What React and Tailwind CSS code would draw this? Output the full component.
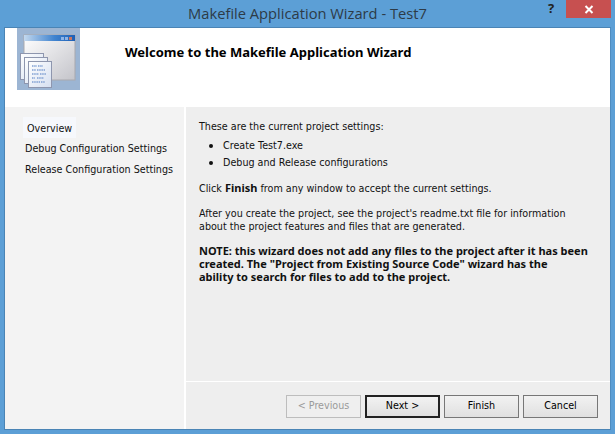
const tahoma = "font-['DejaVu_Sans',sans-serif]";
const bold = "font-['Noto_Sans',sans-serif] font-bold";

function WizardIcon() {
  return (
    <svg width="63" height="62" viewBox="0 0 63 62" className="shrink-0 bg-[#9cb5d3]">
      <defs>
        <linearGradient id="bar" x1="0" x2="1" y1="0" y2="0">
          <stop offset="0" stopColor="#c3d8ee" />
          <stop offset="0.6" stopColor="#3f83cf" />
          <stop offset="1" stopColor="#1f5fb5" />
        </linearGradient>
        <linearGradient id="body" x1="0" x2="1" y1="0" y2="1">
          <stop offset="0" stopColor="#ffffff" />
          <stop offset="1" stopColor="#c4c4ca" />
        </linearGradient>
        <linearGradient id="page" x1="0" x2="1" y1="0" y2="1">
          <stop offset="0" stopColor="#ffffff" />
          <stop offset="1" stopColor="#d5dff0" />
        </linearGradient>
      </defs>
      <rect x="7" y="7" width="51" height="45" fill="url(#body)" stroke="#a9a9ae" />
      <rect x="7" y="7" width="51" height="6" fill="url(#bar)" />
      <rect x="44" y="9" width="3" height="3" fill="#8fb4e6" />
      <rect x="48" y="9" width="3" height="3" fill="#8fb4e6" />
      <rect x="52" y="9" width="3" height="3" fill="#c9765f" />
      <rect x="3.5" y="25.5" width="23" height="26" fill="url(#page)" stroke="#8e96ae" />
      <rect x="7.5" y="29.5" width="23" height="26" fill="url(#page)" stroke="#8e96ae" />
      <rect x="11.5" y="33.5" width="23" height="26" fill="url(#page)" stroke="#8e96ae" />
      <path
        d="M15 38h5m1 0h5M15 42h4m1 0h8M15 46h7m1 0h6M15 50h3m2 0h7M15 54h8m1 0h4"
        stroke="#7f9fd2"
        strokeWidth="1.4"
        strokeDasharray="1.5 0.7"
      />
    </svg>
  );
}

function Btn({ children, primary, disabled }) {
  return (
    <button
      disabled={disabled}
      className={
        primary
          ? "w-[75px] h-[23px] border-2 border-[#222] bg-gradient-to-b from-[#f2f2f2] to-[#e0e0e0] text-[9.6px] text-black"
          : disabled
            ? "w-[75px] h-[23px] border border-[#bdbdbd] bg-[#efefef] text-[9.6px] text-[#9a9a9a]"
            : "w-[75px] h-[23px] border border-[#777] bg-gradient-to-b from-[#f2f2f2] to-[#e0e0e0] text-[9.6px] text-black"
      }
    >
      {children}
    </button>
  );
}

function Bullet({ children }) {
  return (
    <li className="flex items-center">
      <span className="ml-[10px] mr-[10px] w-[4px] h-[4px] rounded-full bg-[#111]" />
      {children}
    </li>
  );
}

export default function App() {
  return (
    <div className={`w-[615px] h-[434px] bg-[#5c9fd6] flex flex-col overflow-hidden text-[#111] ${tahoma}`}>
      <div className="relative h-[27px] shrink-0 flex items-center justify-center font-['Open_Sans',sans-serif] text-[14.7px] text-[#2d3b47]">
        <span>Makefile Application Wizard - Test7</span>
        <span className="absolute left-[548px] top-[1px] text-[13px] font-bold text-[#222] leading-[14px]">?</span>
        <div className="absolute left-[566px] top-0 w-[45px] h-[18px] bg-[#c75050] flex items-center justify-center">
          <svg width="10" height="9" viewBox="0 0 10 9">
            <path d="M1.5 1l7 7M8.5 1l-7 7" stroke="#fff" strokeWidth="2" />
          </svg>
        </div>
      </div>
      <div className="mx-[4px] mb-[4px] flex-1 flex flex-col border border-[#4a84b5] border-r-[#4f8cc0]">
        <div className="h-[79px] shrink-0 bg-white flex items-start pl-[12px]">
          <WizardIcon />
          <h1 className={`ml-[45px] mt-[15px] text-[13px] text-black ${bold}`}>
            Welcome to the Makefile Application Wizard
          </h1>
        </div>
        <div className="flex-1 flex bg-white">
          <nav className="w-[179px] bg-[#f3f3f3] pl-[18px] pt-[10px] text-[9.6px] flex flex-col items-start">
            <span className="bg-[#f6f8fc] px-[4px] h-[21px] leading-[23px]">Overview</span>
            <span className="ml-[2px] leading-[22px] h-[20px]">Debug Configuration Settings</span>
            <span className="ml-[2px] mt-[1px] leading-[22px] h-[20px]">Release Configuration Settings</span>
          </nav>
          <div className="ml-[2px] flex-1 flex flex-col">
            <div className="flex-1 bg-[#eeeeee] pl-[13px] pr-[18px] pt-[13px] text-[9.6px] leading-[13px]">
              <p>These are the current project settings:</p>
              <ul className="mt-[6px] flex flex-col gap-[4px]">
                <Bullet>Create Test7.exe</Bullet>
                <Bullet>Debug and Release configurations</Bullet>
              </ul>
              <p className="mt-[12px]">
                Click <b className={`text-[11px] ${bold}`}>Finish</b> from any window to accept the current settings.
              </p>
              <p className="mt-[12px]">
                After you create the project, see the project's readme.txt file for information about the project features and files that are generated.
              </p>
              <p className={`mt-[11px] text-[11px] ${bold}`}>
                NOTE: this wizard does not add any files to the project after it has been created. The "Project from Existing Source Code" wizard has the ability&nbsp;to search for files to add to the project.
              </p>
            </div>
            <div className="h-[48px] shrink-0 bg-[#eeeeee] border-t border-white flex justify-end items-start gap-[4px] pt-[13px] pr-[12px]">
              <Btn disabled>&lt; Previous</Btn>
              <Btn primary>Next &gt;</Btn>
              <Btn>Finish</Btn>
              <Btn>Cancel</Btn>
            </div>
          </div>
        </div>
      </div>
    </div>
  );
}
